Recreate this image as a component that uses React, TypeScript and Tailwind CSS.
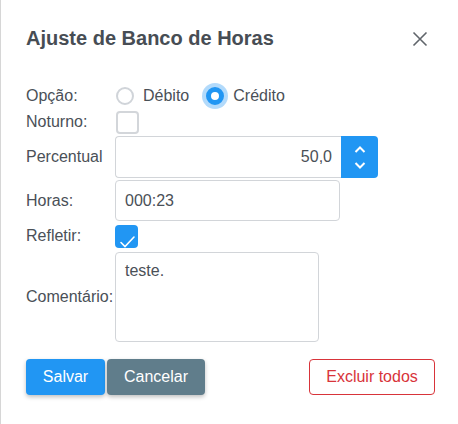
import React from 'react'

const labelCls = 'w-[89px] shrink-0 text-[16px] text-[#4a5057]'

function Radio({ checked, label }: { checked?: boolean; label: string }) {
  return (
    <label className="flex items-center gap-[9px]">
      {checked ? (
        <span className="box-border h-[18px] w-[18px] rounded-full border-[5px] border-[#2196f3] bg-white shadow-[0_0_0_4px_rgba(33,150,243,0.35)]" />
      ) : (
        <span className="box-border h-[18px] w-[18px] rounded-full border-2 border-[#d0d4d9] bg-white" />
      )}
      <span className="text-[16px] text-[#4a5057]">{label}</span>
    </label>
  )
}

function Checkbox({ checked }: { checked?: boolean }) {
  if (checked) {
    return (
      <span className="relative block h-[23px] w-[23px] rounded-[4px] bg-[#2196f3]">
        <svg width="23" height="23" viewBox="0 0 23 23" className="absolute left-0 top-0">
          <path d="M6 17.5 L10 21.5 L19 12" fill="none" stroke="#fff" strokeWidth="1.6" strokeLinecap="round" />
        </svg>
      </span>
    )
  }
  return <span className="box-border block h-[23px] w-[23px] rounded-[4px] border-2 border-[#d3d6da] bg-white" />
}

export default function App() {
  return (
    <div className="h-[424px] w-[458px] overflow-hidden bg-white font-['Liberation_Sans',Arial,sans-serif] border-l border-[#d6d6d6]">
      <div className="flex items-start justify-between pl-[25px] pr-[30px] pt-[26px]">
        <h2 className="text-[20px] font-bold leading-[24px] text-[#474d54]">Ajuste de Banco de Horas</h2>
        <svg width="16" height="16" viewBox="0 0 16 16" className="mt-[5px]">
          <path d="M1.5 1.5 L14.5 14.5 M14.5 1.5 L1.5 14.5" stroke="#60656b" strokeWidth="1.6" />
        </svg>
      </div>

      <div className="mt-[34px] flex flex-col gap-[2px] pl-[25px]">
        <div className="flex h-[24px] items-center">
          <span className={labelCls}>Opção:</span>
          <div className="flex items-center gap-[17px] pl-[1px]">
            <Radio label="Débito" />
            <Radio checked label="Crédito" />
          </div>
        </div>

        <div className="flex h-[24px] items-center">
          <span className={labelCls}>Noturno:</span>
          <span className="pl-[1px]">
            <Checkbox />
          </span>
        </div>

        <div className="flex h-[42px] items-center">
          <span className={labelCls}>Percentual</span>
          <div className="flex h-[42px]">
            <input
              readOnly
              value="50,0"
              className="box-border h-[42px] w-[226px] rounded-l-[4px] border border-r-0 border-[#d2d5d9] px-[9px] text-right text-[16px] text-[#4a5057] outline-none"
            />
            <div className="flex w-[37px] flex-col items-center justify-center gap-[9px] rounded-r-[4px] bg-[#2196f3]">
              <svg width="12" height="7" viewBox="0 0 12 7">
                <path d="M1.5 6 L6 1.5 L10.5 6" fill="none" stroke="#fff" strokeWidth="2" />
              </svg>
              <svg width="12" height="7" viewBox="0 0 12 7">
                <path d="M1.5 1 L6 5.5 L10.5 1" fill="none" stroke="#fff" strokeWidth="2" />
              </svg>
            </div>
          </div>
        </div>

        <div className="flex h-[41px] items-center">
          <span className={labelCls}>Horas:</span>
          <input
            readOnly
            value="000:23"
            className="box-border h-[41px] w-[225px] rounded-[4px] border border-[#d2d5d9] px-[9px] text-[16px] text-[#4a5057] outline-none"
          />
        </div>

        <div className="flex h-[26px] items-center">
          <span className={labelCls}>Refletir:</span>
          <Checkbox checked />
        </div>

        <div className="mt-[1px] flex items-center">
          <span className={labelCls}>Comentário:</span>
          <textarea
            readOnly
            value="teste."
            className="box-border h-[90px] w-[204px] resize-none rounded-[4px] border border-[#d2d5d9] px-[9px] pt-[8px] text-[16px] leading-[20px] text-[#4a5057] outline-none"
          />
        </div>
      </div>

      <div className="mt-[17px] flex items-center pl-[25px] pr-[23px]">
        <button className="h-[36px] w-[79px] rounded-[4px] bg-[#2196f3] text-[16px] text-white shadow-[0_2px_4px_rgba(0,0,0,0.25)]">
          Salvar
        </button>
        <button className="ml-[2px] h-[36px] w-[98px] rounded-[4px] bg-[#607d8b] text-[16px] text-white shadow-[0_2px_4px_rgba(0,0,0,0.25)]">
          Cancelar
        </button>
        <button className="ml-auto h-[36px] w-[126px] rounded-[4px] border border-[#d8343a] bg-white text-[16px] text-[#d8343a]">
          Excluir todos
        </button>
      </div>
    </div>
  )
}
